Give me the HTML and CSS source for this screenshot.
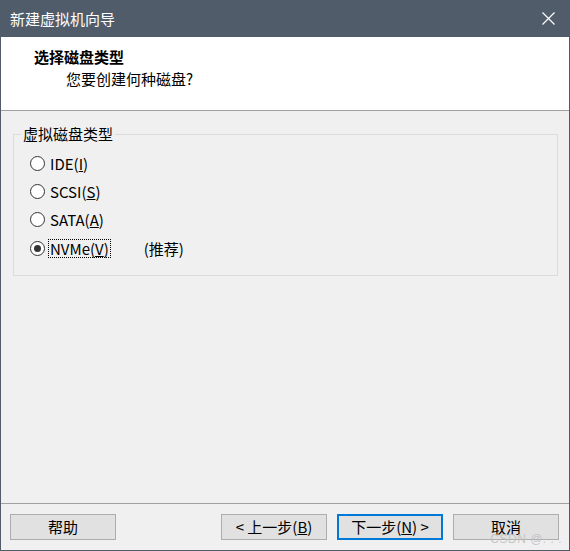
FILE: index.html
```html
<!DOCTYPE html>
<html lang="zh-CN">
<head>
<meta charset="utf-8">
<title>新建虚拟机向导</title>
<link rel="stylesheet" href="styles.css">
</head>
<body>
<div class="window">
  <div class="titlebar">
    <span class="title">新建虚拟机向导</span>
    <svg class="close" width="13" height="13" viewBox="0 0 13 13"><path d="M0.5 0.5 L12.5 12.5 M12.5 0.5 L0.5 12.5" stroke="#ffffff" stroke-width="1.2" fill="none"/></svg>
  </div>
  <div class="header">
    <div class="h-title">选择磁盘类型</div>
    <div class="h-sub">您要创建何种磁盘?</div>
  </div>
  <div class="content">
    <fieldset class="group">
      <legend class="legend">虚拟磁盘类型</legend>
      <div class="row"><span class="radio"></span><span class="label">IDE(<u>I</u>)</span></div>
      <div class="row"><span class="radio"></span><span class="label">SCSI(<u>S</u>)</span></div>
      <div class="row"><span class="radio"></span><span class="label">SATA(<u>A</u>)</span></div>
      <div class="row"><span class="radio checked"></span><span class="label focus">NVMe(<u>V</u>)</span><span class="hint">(推荐)</span></div>
    </fieldset>
  </div>
  <div class="footer">
    <div class="btn">帮助</div>
    <div class="spacer"></div>
    <div class="btn">&lt; 上一步(<u>B</u>)</div>
    <div class="btn primary">下一步(<u>N</u>) &gt;</div>
    <div class="btn">取消</div>
    <span class="watermark">CSDN @. . .</span>
  </div>
</div>
</body>
</html>
```

FILE: styles.css
```css
* { box-sizing: border-box; }
html, body { margin: 0; padding: 0; }
body {
  font-family: "Noto Sans CJK SC", "Noto Sans", sans-serif;
  font-size: 15px;
  color: #000;
  background: #f0f0f0;
}
.window {
  width: 570px;
  height: 551px;
  border: 1px solid #515c6b;
  border-top: none;
  background: #f0f0f0;
  display: flex;
  flex-direction: column;
  position: relative;
}
.titlebar {
  height: 37px;
  margin: 0 -1px;
  background: #515c6b;
  color: #fff;
  display: flex;
  align-items: center;
  padding: 0 15px 0 10px;
}
.title { flex: 1; font-size: 15px; line-height: 20px; }
.close { display: block; }
.header {
  height: 74px;
  background: #fff;
  border-bottom: 1px solid #a0a0a0;
  padding: 10px 0 0 33px;
}
.h-title { font-weight: bold; line-height: 20px; font-size: 15px; }
.h-sub { line-height: 20px; margin-top: 2px; padding-left: 32px; }
.content { flex: 1; }
.group {
  margin: 13px 11px 0 12px;
  border: 1px solid #dcdcdc;
  padding: 5px 0 12px 16px;
  min-width: 0;
}
.legend {
  padding: 0 2px;
  margin-left: -9px;
  line-height: 20px;
}
.row {
  height: 28.4px;
  display: flex;
  align-items: center;
}
.radio {
  width: 15px;
  height: 15px;
  border: 1px solid #333;
  border-radius: 50%;
  background: #fff;
  margin-right: 3px;
  position: relative;
  flex: none;
}
.radio.checked::after {
  content: "";
  position: absolute;
  left: 3px; top: 3px;
  width: 7px; height: 7px;
  border-radius: 50%;
  background: #333;
}
.label { line-height: 17px; padding: 0 1px; border: 1px solid transparent; }
.label.focus { border: 1px dotted #000; }
.hint { margin-left: 33px; }
.footer {
  height: 47px;
  border-top: 1px solid #a0a0a0;
  display: flex;
  align-items: flex-start;
  padding: 10px 10px 0 9px;
  position: relative;
}
.spacer { flex: 1; }
.btn {
  width: 106px;
  height: 26px;
  border: 1px solid #adadad;
  background: #e1e1e1;
  display: flex;
  align-items: center;
  justify-content: center;
  line-height: 16px;
}
.btn + .btn { margin-left: 10px; }
.btn.primary { border: 2px solid #0078d7; }
.watermark {
  position: absolute;
  right: 7px;
  bottom: 5px;
  font-family: "Liberation Sans", sans-serif;
  font-size: 12px;
  line-height: 12px;
  color: rgba(190,190,190,0.85);
  letter-spacing: 0.5px;
}
```
